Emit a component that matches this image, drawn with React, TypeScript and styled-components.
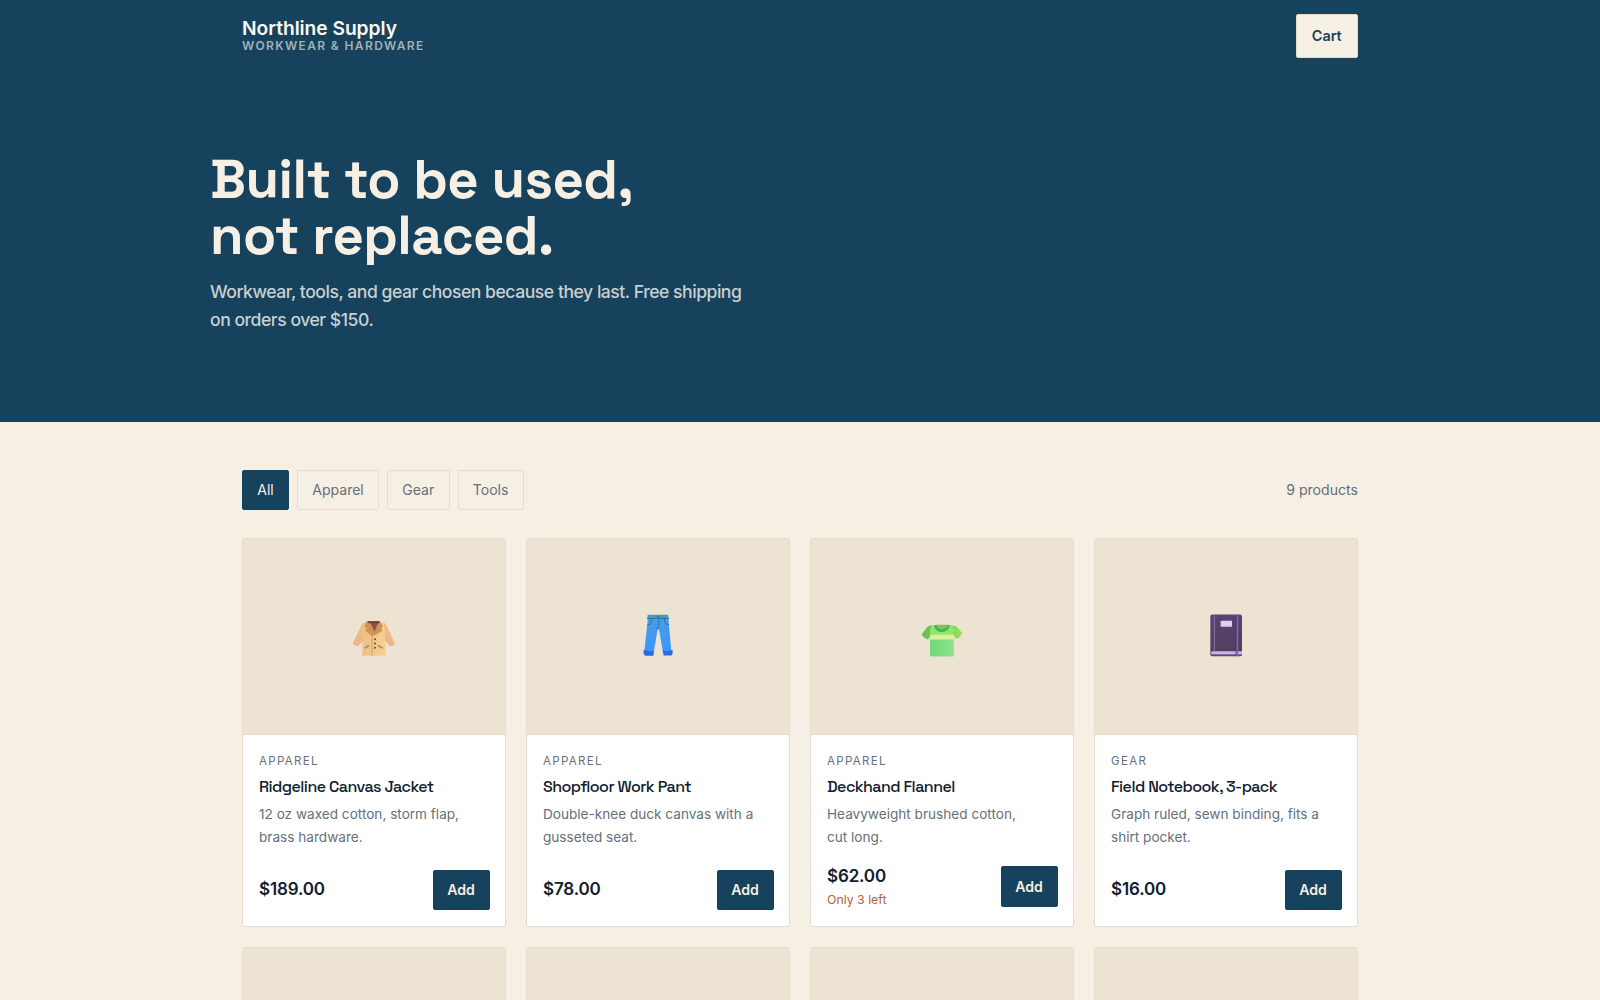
import React from "react";
import styled, { createGlobalStyle } from "styled-components";

const navy = "#16425e";
const cream = "#f6efe4";
const sand = "#ece3d3";
const line = "#e5dccd";
const ink = "#10202d";
const muted = "#65707a";

const GlobalStyle = createGlobalStyle`
  *, *::before, *::after { box-sizing: border-box; }
  html, body { margin: 0; height: 1000px; overflow: hidden; background: ${cream}; }
  body { font-family: Inter, "Liberation Sans", sans-serif; color: ${ink}; }
  button { font-family: inherit; margin: 0; }
  h1, h2, p { margin: 0; }
`;

const Page = styled.div`
  height: 1000px;
  overflow: hidden;
`;

const Top = styled.div`
  background: ${navy};
  height: 422px;
`;

const Header = styled.header`
  max-width: 1180px;
  height: 72px;
  margin: 0 auto;
  padding: 0 32px;
  display: flex;
  align-items: center;
  justify-content: space-between;
`;

const Brand = styled.div`
  display: flex;
  flex-direction: column;
`;

const BrandName = styled.span`
  font-size: 19.2px;
  line-height: 19px;
  font-weight: 600;
  letter-spacing: -0.03px;
  color: #fbf8f0;
`;

const BrandTag = styled.span`
  font-size: 12px;
  line-height: 15px;
  font-weight: 600;
  letter-spacing: 1.36px;
  color: #a2b1b6;
  text-transform: uppercase;
`;

const CartButton = styled.button`
  width: 62.5px;
  height: 43.5px;
  border: 1px solid #e3dac9;
  border-radius: 2px;
  background: ${cream};
  color: ${navy};
  font-size: 14.4px;
  font-weight: 600;
  padding: 0 0 2px;
`;

const Hero = styled.section`
  max-width: 1180px;
  margin: 0 auto;
  padding-top: 79px;
`;

const Headline = styled.h1`
  font-family: "Space Grotesk", Inter, sans-serif;
  font-size: 54.4px;
  line-height: 56px;
  font-weight: 600;
  letter-spacing: -0.01em;
  color: ${cream};
`;

const Lead = styled.p`
  margin-top: 15px;
  font-size: 17.6px;
  line-height: 28px;
  font-weight: 500;
  letter-spacing: -0.48px;
  color: #c8d0d1;
`;

const Main = styled.main`
  max-width: 1180px;
  margin: 0 auto;
  padding: 48px 32px 0;
`;

const Toolbar = styled.div`
  display: flex;
  align-items: center;
  justify-content: space-between;
  height: 39.5px;
  margin-bottom: 28px;
`;

const Filters = styled.div`
  display: flex;
  gap: 8px;
  height: 100%;
`;

const FilterButton = styled.button<{ $active?: boolean }>`
  padding: 0 14.3px;
  font-size: 14px;
  border-radius: 2px;
  border: 1px solid ${(p) => (p.$active ? navy : line)};
  background: ${(p) => (p.$active ? navy : "transparent")};
  color: ${(p) => (p.$active ? cream : muted)};
`;

const Count = styled.span`
  font-size: 14.1px;
  color: ${muted};
`;

const Grid = styled.div`
  display: grid;
  grid-template-columns: repeat(4, 1fr);
  gap: 20px;
`;

const Card = styled.article`
  height: 389.5px;
  display: flex;
  flex-direction: column;
  background: #fff;
  border: 1px solid ${line};
  border-radius: 2px;
  overflow: hidden;
`;

const Picture = styled.div`
  flex: none;
  height: 196.5px;
  display: flex;
  align-items: center;
  justify-content: center;
  background: ${sand};
  border-bottom: 1px solid ${line};
  svg { width: 70px; height: 70px; }
`;

const Body = styled.div`
  flex: 1;
  display: flex;
  flex-direction: column;
  padding: 17px 15.5px 16px 16px;
`;

const Category = styled.span`
  font-size: 11.5px;
  line-height: 19px;
  letter-spacing: 1.35px;
  text-transform: uppercase;
  color: ${muted};
`;

const Title = styled.h2`
  font-family: "Space Grotesk", Inter, sans-serif;
  margin-top: 5px;
  font-size: 16px;
  line-height: 22px;
  font-weight: 500;
  letter-spacing: -0.55px;
  white-space: nowrap;
`;

const Description = styled.p`
  margin-top: 5px;
  font-size: 13.6px;
  line-height: 23px;
  color: ${muted};
`;

const Foot = styled.div`
  margin-top: auto;
  display: flex;
  align-items: center;
  justify-content: space-between;
`;

const Price = styled.div<{ $single: boolean }>`
  font-size: 17px;
  line-height: 26px;
  font-weight: 600;
  letter-spacing: -0.15px;
  padding-bottom: ${(p) => (p.$single ? 2 : 0)}px;
`;

const Stock = styled.div`
  font-size: 12.3px;
  line-height: 21px;
  color: #b4633b;
`;

const AddButton = styled.button`
  width: 57px;
  height: 40.5px;
  border: 1px solid ${navy};
  border-radius: 2px;
  background: ${navy};
  color: ${cream};
  font-size: 14.1px;
  font-weight: 600;
  padding: 0;
`;

const Coat = () => (
  <svg viewBox="-3 2.5 210 210">
    <defs>
      <linearGradient id="coat" x1="0" x2="1"><stop offset="0" stopColor="#edc08a" /><stop offset="1" stopColor="#f5d090" /></linearGradient>
      <linearGradient id="sleeve" x1="0" y1="0" x2="0" y2="1"><stop offset="0" stopColor="#edc07c" /><stop offset="1" stopColor="#f1b48b" /></linearGradient>
    </defs>
    <path d="M74 65 66 72 38 130Q38 134 53 138L68 124 73 78ZM130 65 138 73 165 130Q164 135 151 139L135 122Z" fill="url(#sleeve)" />
    <path d="M76 64H127L134 86 137 167H67L68 86Z" fill="url(#coat)" />
    <path d="M82 63H119L102 101Z" fill="#8c4e49" />
    <path d="M80 64 72 79 80 83 76 92 97 109 103 93 92 70ZM119 64 129 76 124 86 128 92 98 109 111 76Z" fill="#cf9453" />
    <path d="M82 63H120L117 69H86Z" fill="#714044" />
    <path d="M96 105V166" stroke="#bf8753" strokeWidth="2" />
    <path d="m74 144 13-8M113 136l16 8" stroke="#c38645" strokeWidth="5" />
    <g fill="#704229"><circle cx="105" cy="117" r="3" /><circle cx="105" cy="130" r="3" /><circle cx="105" cy="143" r="3" /></g>
  </svg>
);

const Jeans = () => (
  <svg viewBox="-6 2.5 210 210">
    <defs><linearGradient id="denim" x1="0" y1="0" x2="0" y2="1"><stop offset="0" stopColor="#4b9ce1" /><stop offset="1" stopColor="#3d95ff" /></linearGradient></defs>
    <path d="M69 51H130L139 154 114 157 102 88H98L86 157 58 154Z" fill="url(#denim)" />
    <path d="M68 44H129L131 55H67Z" fill="#4999b6" />
    <path d="M66 55H132M101 55V81L93 86M67 73Q80 75 81 57M132 73Q119 74 118 57" fill="none" stroke="#2475bb" strokeWidth="3" />
    <circle cx="99" cy="49" r="3" fill="#267298" />
    <path d="M56 149Q71 155 87 152L85 167H61Q54 163 56 149ZM113 152Q129 155 142 149Q145 163 139 166H116Z" fill="#286be2" />
  </svg>
);

const Shirt = () => (
  <svg viewBox="-3 2.5 210 210">
    <defs>
      <linearGradient id="tee" x1="0" x2="1"><stop offset="0" stopColor="#72d678" /><stop offset="1" stopColor="#8ae48c" /></linearGradient>
      <linearGradient id="arm" x1="0" x2="1"><stop offset="0" stopColor="#69bd4e" /><stop offset="1" stopColor="#98df5d" /></linearGradient>
    </defs>
    <path d="M74 75Q61 75 57 81L41 103Q46 113 60 118L69 103ZM128 75Q144 75 148 81L163 99Q158 110 145 117L136 104Z" fill="url(#arm)" />
    <path d="M72 75H131Q138 87 136 103L137 168H66V103Q64 88 72 75Z" fill="#91e46c" />
    <path d="M66 117H137V168H66Z" fill="url(#tee)" />
    <path d="M67 104H137V118H67Z" fill="#dbf1a0" />
    <path d="M78 75Q80 94 101 96Q123 94 126 75L118 74Q117 84 101 86Q87 84 86 74Z" fill="#45b660" />
    <path d="M86 74H118Q115 84 102 84Q89 84 86 74Z" fill="#91b94e" />
  </svg>
);

const Notebook = () => (
  <svg viewBox="3 2.5 210 210">
    <defs><linearGradient id="cover" x1="0" y1="0" x2="0" y2="1"><stop offset="0" stopColor="#5c4174" /><stop offset="1" stopColor="#4f405c" /></linearGradient></defs>
    <rect x="61" y="43" width="95" height="125" rx="6" fill="url(#cover)" />
    <path d="M65 153H156V164H65Q61 158 65 153Z" fill="#cfb1e9" />
    <path d="M65 165H156" stroke="#694588" strokeWidth="4" />
    <path d="M73 45V151" stroke="#8b739e" strokeWidth="3" />
    <path d="M142 43V168" stroke="#8c62bf" strokeWidth="5" />
    <path d="M138 44V167" stroke="#4b2d67" strokeWidth="2" />
    <rect x="92" y="62" width="34" height="18" rx="2" fill="#e2cff0" />
  </svg>
);

const products = [
  { category: "Apparel", title: "Ridgeline Canvas Jacket", text: ["12 oz waxed cotton, storm flap,", "brass hardware."], price: "$189.00", icon: <Coat /> },
  { category: "Apparel", title: "Shopfloor Work Pant", text: ["Double-knee duck canvas with a", "gusseted seat."], price: "$78.00", icon: <Jeans /> },
  { category: "Apparel", title: "Deckhand Flannel", text: ["Heavyweight brushed cotton,", "cut long."], price: "$62.00", stock: "Only 3 left", icon: <Shirt /> },
  { category: "Gear", title: "Field Notebook, 3-pack", text: ["Graph ruled, sewn binding, fits a", "shirt pocket."], price: "$16.00", icon: <Notebook /> },
];

export default function App() {
  return (
    <Page>
      <GlobalStyle />
      <Top>
        <Header>
          <Brand>
            <BrandName>Northline Supply</BrandName>
            <BrandTag>Workwear &amp; Hardware</BrandTag>
          </Brand>
          <CartButton>Cart</CartButton>
        </Header>
        <Hero>
          <Headline>Built to be used,<br />not replaced.</Headline>
          <Lead>Workwear, tools, and gear chosen because they last. Free shipping<br />on orders over $150.</Lead>
        </Hero>
      </Top>
      <Main>
        <Toolbar>
          <Filters>
            <FilterButton $active>All</FilterButton>
            <FilterButton>Apparel</FilterButton>
            <FilterButton>Gear</FilterButton>
            <FilterButton>Tools</FilterButton>
          </Filters>
          <Count>9 products</Count>
        </Toolbar>
        <Grid>
          {products.map((p) => (
            <Card key={p.title}>
              <Picture>{p.icon}</Picture>
              <Body>
                <Category>{p.category}</Category>
                <Title>{p.title}</Title>
                <Description>{p.text[0]}<br />{p.text[1]}</Description>
                <Foot>
                  <div>
                    <Price $single={!p.stock}>{p.price}</Price>
                    {p.stock && <Stock>{p.stock}</Stock>}
                  </div>
                  <AddButton>Add</AddButton>
                </Foot>
              </Body>
            </Card>
          ))}
          {[0, 1, 2, 3].map((i) => (
            <Card key={i}><Picture /></Card>
          ))}
        </Grid>
      </Main>
    </Page>
  );
}
